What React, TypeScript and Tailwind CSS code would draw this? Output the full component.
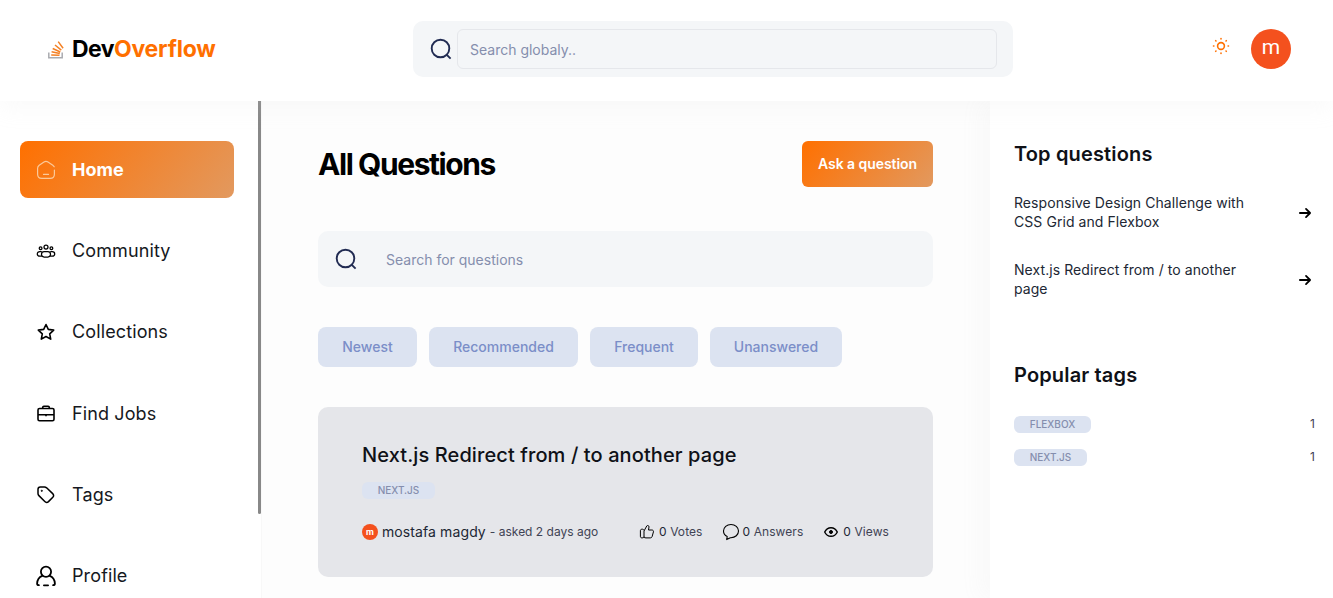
import React from "react";

type Glyph = () => React.ReactElement;

const SearchIcon = () => (
  <svg className="size-6 shrink-0" viewBox="0 0 24 24" fill="none" stroke="#212b52" strokeWidth="1.9">
    <circle cx="11.5" cy="11.5" r="8.8" />
    <path d="M17.8 17.8 21.600 21.600" />
  </svg>
);

const HomeIcon: Glyph = () => (
  <svg className="size-5" viewBox="0 0 20 20" fill="none" stroke="#fbc99a" strokeWidth="1.2" strokeLinecap="round">
    <path d="M18.4 10v4.2c0 3-1.3 4.2-4.2 4.2H5.8c-2.9 0-4.200-1.200-4.200-4.200V8.300c0-1.400.5-2.300 1.600-3.100L8 2c1.300-.9 2.700-.9 4 0l4.800 3.200c.7.500 1.100.900 1.400 1.600M7.500 14.400h5" />
  </svg>
);

const CommunityIcon: Glyph = () => (
  <svg className="size-5" viewBox="0 0 20 20" fill="none" stroke="#000" strokeWidth="1.25" strokeLinecap="round">
    <circle cx="10" cy="6" r="2" />
    <circle cx="4.6" cy="7.2" r="1.4" />
    <circle cx="15.4" cy="7.2" r="1.4" />
    <rect x="5.500" y="10.700" width="9" height="5.300" rx="2.650" />
    <path d="M5.300 10.700H3.800C2.300 10.700 1.300 11.600 1.300 12.900S2.300 15.200 3.800 15.200h1.500M14.700 10.700h1.500c1.500 0 2.500.9 2.500 2.200S17.700 15.200 16.200 15.200h-1.500" />
  </svg>
);

const StarIcon: Glyph = () => (
  <svg className="size-5" viewBox="0 0 20 20" fill="none" stroke="#000" strokeWidth="1.6" strokeLinejoin="round">
    <path d="m10 2.500 2.300 4.900 5.400.7-4 3.700 1 5.300L10 14.500l-4.700 2.600 1-5.300-4-3.700 5.400-.7Z" />
  </svg>
);

const JobsIcon: Glyph = () => (
  <svg className="size-5" viewBox="0 0 20 20" fill="none" stroke="#000" strokeWidth="1.6" strokeLinejoin="round">
    <rect x="2" y="4.500" width="16" height="12.300" rx="1.500" />
    <path d="M6.700 4.300V3.500c0-.7.500-1.200 1.200-1.200h4.200c.7 0 1.200.5 1.200 1.200v.8M2 10.700h16M10 10.300v2" />
  </svg>
);

const TagIcon: Glyph = () => (
  <svg className="size-5" viewBox="0 0 20 20" fill="none" stroke="#000" strokeWidth="1.5" strokeLinejoin="round">
    <path d="M4.300 2h4.200c.8 0 1.500.3 2.100.8l6.100 5.800c1.200 1.200 1.200 2.600.1 3.700l-4.300 4.300c-1.200 1.100-2.600 1.100-3.700-.1L2.900 10.600C2.300 10 2 9.300 2 8.500V4.300C2 2.900 2.900 2 4.300 2Z" />
    <circle cx="5.800" cy="5.800" r=".6" fill="#000" strokeWidth=".9" />
  </svg>
);

const ProfileIcon: Glyph = () => (
  <svg className="size-5 overflow-visible" viewBox="0 0 20 20" fill="none" stroke="#000" strokeWidth="1.8" strokeLinecap="round">
    <circle cx="10" cy="5.800" r="5.100" />
    <path d="M6.200 9.800C3.200 11 1.300 14 1.100 17.500c0 1.100.6 1.700 1.800 1.700M13.800 9.800c3 1.200 4.900 4.200 5.100 7.700 0 1.100-.6 1.700-1.800 1.700M7.900 19.300h4.200" />
  </svg>
);

const LogoMark = () => (
  <svg className="h-[19px] w-4" viewBox="0 0 16 19" fill="none">
    <path d="M.8 12.500v5.200h13.400v-5.200" stroke="#aaabb0" strokeWidth="1.500" />
    <path d="m3.200 14.900 8.300.3M3.600 11.700l8.200 1.700M4.700 8.500l7.600 3.500M7 5l6.300 5.200M10.200 1.600l4.900 6.600" stroke="#f48024" strokeWidth="1.500" />
  </svg>
);

const SunIcon = () => (
  <svg className="size-5" viewBox="0 0 20 20" fill="none" stroke="#ff7000" strokeWidth="1.600" strokeLinecap="round">
    <circle cx="10" cy="10" r="3.400" />
    <path d="M10 2.500v.4M10 17.100v.4M2.500 10h.4M17.100 10h.4M4.700 4.700l.3.300M15 15l.3.300M4.700 15.300l.3-.3M15 5l.3-.3" />
  </svg>
);

const ArrowIcon = () => (
  <svg className="size-5 shrink-0" viewBox="0 0 20 20" fill="none" stroke="#000" strokeWidth="1.800" strokeLinecap="round" strokeLinejoin="round">
    <path d="M4.900 10h10.200M11 5.900l4.100 4.100-4.100 4.100" />
  </svg>
);

const LikeIcon = () => (
  <svg className="size-4" viewBox="0 0 16 16" fill="none" stroke="#000" strokeWidth="1" strokeLinejoin="round">
    <path d="M5 13.300V7l2.800-5.100c.6-.8 2.300-.4 2.200 1L9.500 6h3.400c1.200 0 1.800.9 1.500 2l-1.300 4.600c-.3.900-.9 1.300-1.800 1.300H7c-1 0-1.300-.2-2-.6ZM5 6.400c-.3-.9-.8-1.200-1.800-1.200-1.300 0-1.800.5-1.800 1.700v5.300c0 1.200.5 1.700 1.800 1.700 1 0 1.600-.3 1.800-1.200" />
  </svg>
);

const AnswerIcon = () => (
  <svg className="size-4 overflow-visible" viewBox="0 0 16 16" fill="none" stroke="#000" strokeWidth="1.100" strokeLinejoin="round">
    <path d="M4.200 12.500C1.800 11.500.5 9.500.5 7.100.5 3.400 3.800.5 8 .5s7.500 2.900 7.500 6.600-3.300 6.600-7.500 6.600H7.300L3.700 15.600Z" />
  </svg>
);

const EyeIcon = () => (
  <svg className="size-4" viewBox="0 0 16 16" fill="none" stroke="#000" strokeWidth="1.400">
    <path d="M1.700 8C3 5.200 5.100 3.700 8 3.700S13 5.200 14.300 8c-1.300 2.800-3.400 4.300-6.300 4.300S3 10.800 1.700 8Z" />
    <circle cx="8" cy="8" r="1.500" fill="#000" strokeWidth="1" />
  </svg>
);

const navItems: { label: string; Icon: Glyph }[] = [
  { label: "Home", Icon: HomeIcon },
  { label: "Community", Icon: CommunityIcon },
  { label: "Collections", Icon: StarIcon },
  { label: "Find Jobs", Icon: JobsIcon },
  { label: "Tags", Icon: TagIcon },
  { label: "Profile", Icon: ProfileIcon },
];

const filters = [
  { label: "Newest", width: "w-[99px]" },
  { label: "Recommended", width: "w-[149px]" },
  { label: "Frequent", width: "w-[108px]" },
  { label: "Unanswered", width: "w-[132px]" },
];

const Header = () => (
  <header className="relative z-10 flex h-[101px] shrink-0 items-start bg-white shadow-[0_8px_20px_0_rgba(218,213,213,0.13)]">
    <div className="flex w-[365px] items-center gap-2 pt-[33px] pl-12">
      <LogoMark />
      <p className="text-[23px] leading-8 font-bold tracking-[-0.6px] text-black">
        Dev<span className="tracking-[-0.2px] text-[#ff7000]">Overflow</span>
      </p>
    </div>
    <div className="mt-[21px] ml-12 flex h-14 w-[600px] items-center rounded-[10px] bg-[#f4f6f8] pr-4 pl-4">
      <SearchIcon />
      <div className="ml-1 flex h-10 flex-1 items-center rounded-md border border-[#e5e7eb] px-3 pt-0.5 text-sm text-[#858ead]">
        Search globaly..
      </div>
    </div>
    <div className="mt-[29px] ml-auto flex pr-[42px]">
      <div className="mt-[7px] mr-5">
        <SunIcon />
      </div>
      <div className="flex size-10 items-center justify-center rounded-full bg-[#f4511e] pb-0.5 font-[Roboto] text-[21px] text-white">m</div>
    </div>
  </header>
);

const LeftNav = () => (
  <nav className="flex w-[262px] shrink-0 justify-between border-r border-[#f8f8f8] bg-white">
    <div className="flex flex-col gap-[24.15px] pt-10 pl-5">
      {navItems.map(({ label, Icon }, i) => (
        <div
          key={label}
          className={
            i === 0
              ? "flex h-[57.2px] w-[214px] shrink-0 items-center gap-4 rounded-lg bg-[linear-gradient(129deg,#ff7000_0%,#e2995f_100%)] px-4 text-lg font-bold text-white"
              : "flex h-[57.2px] w-[214px] shrink-0 items-center gap-4 px-4 text-lg tracking-[0.12px] text-[#151821]"
          }
        >
          <Icon />
          <span>{label}</span>
        </div>
      ))}
    </div>
    <div className="h-[413px] w-[3px] rounded-b-sm bg-[#888888]" />
  </nav>
);

const Stat = ({ icon, label }: { icon: React.ReactNode; label: string }) => (
  <div className="flex items-center gap-1">
    {icon}
    <span>
      0 <span className="text-[#3f4354]">{label}</span>
    </span>
  </div>
);

const QuestionCard = () => (
  <article className="mt-10 h-[170px] rounded-[10px] bg-[#e5e6ea] px-11 pt-[34px]">
    <h3 className="text-xl leading-7 font-medium tracking-[0.1px] text-[#0f1117]">Next.js Redirect from / to another page</h3>
    <div className="mt-[13px] flex h-[17px] w-[73px] items-center justify-center rounded-md bg-[#dce3f1] text-[10px] font-medium text-[#858ead]">NEXT.JS</div>
    <div className="mt-[23px] flex h-5 items-center text-xs text-[#212734]">
      <div className="flex size-4 items-center justify-center rounded-full bg-[#f4511e] pb-px font-[Roboto] text-[9px] font-bold text-white">m</div>
      <span className="ml-1 text-sm tracking-[0.1px]">mostafa magdy</span>
      <span className="ml-1 text-[#3f4354]">- asked 2 days ago</span>
      <div className="ml-auto flex gap-5 tracking-[0.08px]">
        <Stat icon={<LikeIcon />} label="Votes" />
        <Stat icon={<AnswerIcon />} label="Answers" />
        <Stat icon={<EyeIcon />} label="Views" />
      </div>
    </div>
  </article>
);

const Main = () => (
  <main className="w-[728px] shrink-0 pt-10 pr-[57px] pl-14">
    <div className="flex justify-between">
      <h1 className="pt-[2px] text-[30px] leading-[42px] font-bold tracking-[-1.42px] text-black">All Questions</h1>
      <div className="flex h-[46px] w-[131px] items-center justify-center rounded-md bg-[linear-gradient(129deg,#ff7000_0%,#e2995f_100%)] text-sm font-semibold tracking-[-0.06px] text-white">
        Ask a question
      </div>
    </div>
    <div className="mt-11 flex h-14 items-center rounded-[10px] bg-[#f4f6f8] px-4 text-sm text-[#858ead]">
      <SearchIcon />
      <span className="ml-7 pt-0.5">Search for questions</span>
    </div>
    <div className="mt-10 flex gap-3">
      {filters.map(({ label, width }) => (
        <div key={label} className={`${width} flex h-10 items-center justify-center rounded-lg bg-[#dce3f1] text-sm font-medium text-[#7b8ec8]`}>
          {label}
        </div>
      ))}
    </div>
    <QuestionCard />
  </main>
);

const TopQuestion = ({ children }: { children: React.ReactNode }) => (
  <div className="flex h-[37px] items-center justify-between text-[14px] leading-[18.2px] tracking-[0.07px] text-[#212734]">
    <p className="w-[240px]">{children}</p>
    <ArrowIcon />
  </div>
);

const PopularTag = ({ name, width }: { name: string; width: string }) => (
  <div className="flex h-[17px] items-center justify-between">
    <div className={`${width} flex h-[17px] items-center justify-center rounded-md bg-[#dce3f1] text-[10px] font-medium text-[#858ead]`}>{name}</div>
    <span className="pb-0.5 text-xs text-[#3f4354]">1</span>
  </div>
);

const RightPanel = () => (
  <aside className="flex-1 bg-white pt-10 pr-[18px] pl-6 shadow-[-10px_0_20px_0_rgba(184,184,184,0.06)]">
    <h2 className="text-xl leading-[26px] font-semibold tracking-[0.15px] text-[#0f1117]">Top questions</h2>
    <div className="mt-[27px] flex flex-col gap-[30px]">
      <TopQuestion>Responsive Design Challenge with CSS Grid and Flexbox</TopQuestion>
      <TopQuestion>Next.js Redirect from / to another page</TopQuestion>
    </div>
    <h2 className="mt-16 text-xl leading-[26px] font-semibold tracking-[0.15px] text-[#0f1117]">Popular tags</h2>
    <div className="mt-7 flex flex-col gap-4">
      <PopularTag name="FLEXBOX" width="w-[77px]" />
      <PopularTag name="NEXT.JS" width="w-[73px]" />
    </div>
  </aside>
);

export default function App() {
  return (
    <div className="flex h-[598px] flex-col overflow-hidden bg-[#fdfdfd] font-['Inter',sans-serif]">
      <Header />
      <div className="flex min-h-0 flex-1">
        <LeftNav />
        <Main />
        <RightPanel />
      </div>
    </div>
  );
}
